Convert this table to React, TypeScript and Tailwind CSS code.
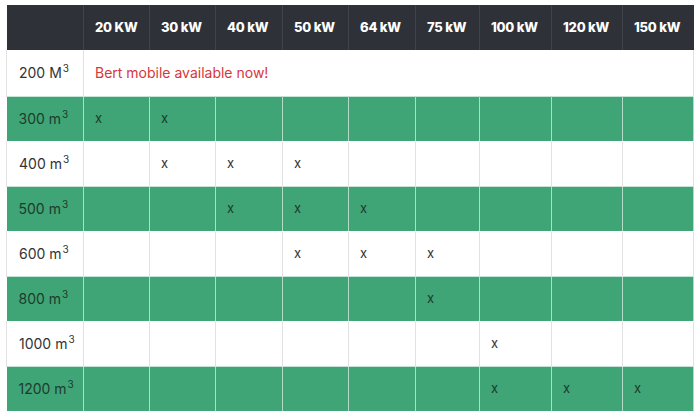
import React from 'react';

const cols = ['20 KW', '30 kW', '40 kW', '50 kW', '64 kW', '75 kW', '100 kW', '120 kW', '150 kW'];
const widths = [77, 66, 66, 67, 66, 67, 64, 72, 71, 71];

const rows: { label: string; unit: string; marks: number[] }[] = [
  { label: '300', unit: 'm', marks: [0, 1] },
  { label: '400', unit: 'm', marks: [1, 2, 3] },
  { label: '500', unit: 'm', marks: [2, 3, 4] },
  { label: '600', unit: 'm', marks: [3, 4, 5] },
  { label: '800', unit: 'm', marks: [5] },
  { label: '1000', unit: 'm', marks: [6] },
  { label: '1200', unit: 'm', marks: [6, 7, 8] },
];

function Cube() {
  return <span className="relative -top-[6px] text-[10px] leading-none ml-[1px]">3</span>;
}

export default function App() {
  return (
    <div className="w-[700px] h-[417px] bg-white pl-[6px] pt-[5px]" style={{ fontFamily: 'Inter, "Liberation Sans", sans-serif' }}>
      <table className="border-collapse table-fixed w-[687px] text-[14px]">
        <colgroup>
          {widths.map((w, i) => (
            <col key={i} style={{ width: w }} />
          ))}
        </colgroup>
        <thead>
          <tr className="bg-[#2e3238] h-[45px]">
            <th className="border-r border-[#3f444a]"></th>
            {cols.map((c, i) => (
              <th
                key={c}
                className={`text-left pl-[11px] font-extrabold text-white text-[13px] tracking-[-0.2px] ${i < cols.length - 1 ? 'border-r border-[#3f444a]' : ''}`}
              >
                {c}
              </th>
            ))}
          </tr>
        </thead>
        <tbody>
          <tr className="h-[46px] bg-white">
            <td className="pl-[12px] text-[#333] border-l border-r border-[#e2e2e2]">
              200 M<Cube />
            </td>
            <td colSpan={9} className="pl-[11px] text-[#d8353c] border-r border-[#e2e2e2]">
              Bert mobile available now!
            </td>
          </tr>
          {rows.map((r, ri) => {
            const green = ri % 2 === 0;
            return (
              <tr
                key={r.label}
                className={green ? 'h-[45px] bg-[#3fa577] border-t border-white/70' : 'h-[45px] bg-white border-t border-white'}
              >
                <td
                  className={`pl-[12px] ${green ? 'text-[#1d3b2c] border-r border-white/60' : 'text-[#333] border-l border-r border-[#e2e2e2]'}`}
                >
                  {r.label} {r.unit}
                  <Cube />
                </td>
                {cols.map((c, ci) => (
                  <td
                    key={c}
                    className={`pl-[11px] text-[13px] ${green ? 'text-[#1d3b2c] border-r border-white/60' : 'text-[#333] border-r border-[#e2e2e2]'}`}
                  >
                    {r.marks.includes(ci) ? 'x' : ''}
                  </td>
                ))}
              </tr>
            );
          })}
        </tbody>
      </table>
    </div>
  );
}
